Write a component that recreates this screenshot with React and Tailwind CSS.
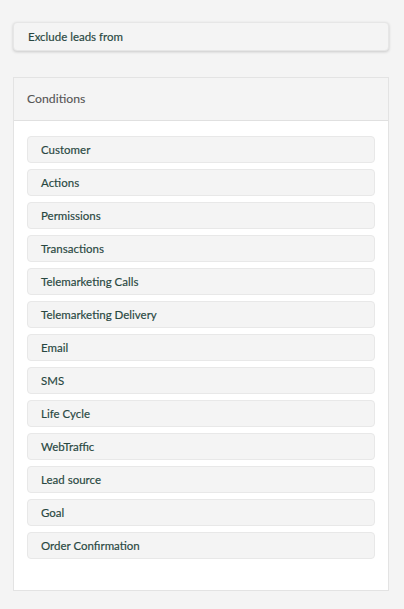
export default function App() {
  const items = [
    "Customer",
    "Actions",
    "Permissions",
    "Transactions",
    "Telemarketing Calls",
    "Telemarketing Delivery",
    "Email",
    "SMS",
    "Life Cycle",
    "WebTraffic",
    "Lead source",
    "Goal",
    "Order Confirmation",
  ];
  return (
    <div
      className="min-h-[609px] w-[404px] bg-[#f4f4f4] pl-[13px] pr-[15px] pt-[22px] pb-[19px] text-[11.5px]"
      style={{ fontFamily: "Lato, 'Open Sans', sans-serif" }}
    >
      <div className="flex h-[29px] items-center rounded-[4px] border border-[#e6e6e6] bg-[#f4f4f4] px-[14px] text-[#284741] shadow-[0_1px_3px_rgba(0,0,0,0.18)] [-webkit-text-stroke:0.15px_#284741]">
        Exclude leads from
      </div>
      <div className="mt-[26px] border border-[#e3e3e3] bg-white">
        <div className="flex h-[43px] items-center border-b border-[#e0e0e0] bg-[#f4f4f4] px-[13px] text-[12.25px] text-[#555] [-webkit-text-stroke:0.1px_#555]">
          Conditions
        </div>
        <div className="flex flex-col gap-[6px] px-[13px] pt-[15px] pb-[31px]">
          {items.map((it) => (
            <div
              key={it}
              className="flex h-[27px] items-center rounded-[4px] border border-[#e8e8e8] bg-[#f4f4f4] px-[13px] text-[#284741] [-webkit-text-stroke:0.15px_#284741]"
            >
              {it}
            </div>
          ))}
        </div>
      </div>
    </div>
  );
}
